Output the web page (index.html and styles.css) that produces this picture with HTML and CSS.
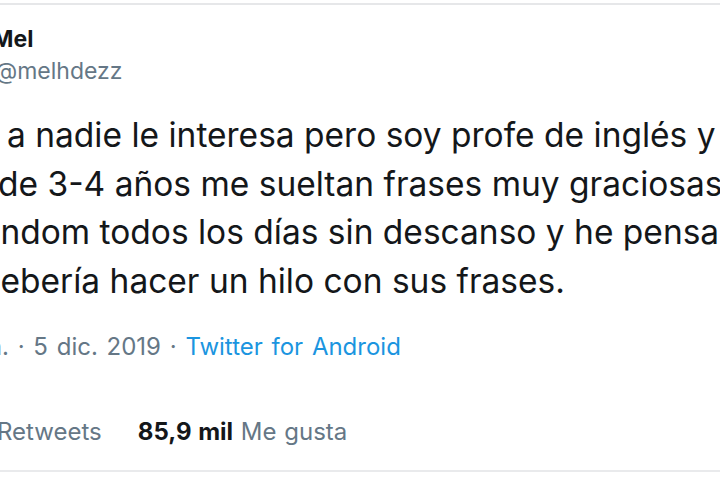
FILE: index.html
```html
<!DOCTYPE html>
<html lang="es">
<head>
<meta charset="utf-8">
<link rel="stylesheet" href="styles.css">
</head>
<body>
<div class="frame">
  <div class="tweet">
    <div class="user">
      <div class="name">Mel</div>
      <div class="handle">@melhdezz</div>
    </div>
    <div class="text">
      <div class="line l1">a nadie le interesa pero soy profe de inglés y</div>
      <div class="line l2">de 3-4 años me sueltan frases muy graciosas y</div>
      <div class="line l3">random todos los días sin descanso y he pensado que</div>
      <div class="line l4">debería hacer un hilo con sus frases.</div>
    </div>
    <div class="meta"><span class="time">m.</span> · 5 dic. 2019 · <span class="source">Twitter for Android</span></div>
    <div class="stats">
      <span class="stat"><span class="label">Retweets</span></span>
      <span class="stat"><b class="num">85,9 mil</b> <span class="label">Me gusta</span></span>
    </div>
  </div>
</div>
</body>
</html>
```
FILE: styles.css
```css
html, body {
  margin: 0;
  padding: 0;
  background: #ffffff;
}
.frame {
  width: 720px;
  height: 480px;
  overflow: hidden;
  padding-top: 3px;
  box-sizing: border-box;
}
.tweet {
  border-top: 2px solid #e6e7e9;
  border-bottom: 2px solid #e9eaec;
  height: 469px;
  box-sizing: border-box;
  display: flex;
  flex-direction: column;
  font-family: Inter, "Noto Sans", sans-serif;
  color: #14171a;
  overflow: hidden;
}
.user {
  padding-top: 20px;
  display: flex;
  flex-direction: column;
}
.name {
  font-weight: 700;
  font-size: 23px;
  line-height: 28px;
  margin-left: -8px;
}
.handle {
  margin-top: 4px;
  font-size: 23px;
  line-height: 28px;
  color: #657786;
  margin-left: -5px;
}
.text {
  margin-top: 26px;
  font-size: 33.5px;
  line-height: 48.5px;
  white-space: nowrap;
}
.l1 { margin-left: 7px; }
.l2 { margin-left: -2px; }
.l3 { margin-left: -31px; }
.l4 { margin-left: -20px; }
.meta {
  margin-top: 27px;
  font-size: 24px;
  line-height: 30px;
  word-spacing: 2px;
  color: #657786;
  white-space: nowrap;
  margin-left: -19px;
}
.source { color: #1b95e0; }
.stats {
  margin-top: 55px;
  font-size: 24px;
  line-height: 30px;
  word-spacing: 1px;
  white-space: nowrap;
  display: flex;
  gap: 36px;
  margin-left: -3px;
}
.num { font-weight: 700; color: #14171a; }
.label { color: #657786; }
```
